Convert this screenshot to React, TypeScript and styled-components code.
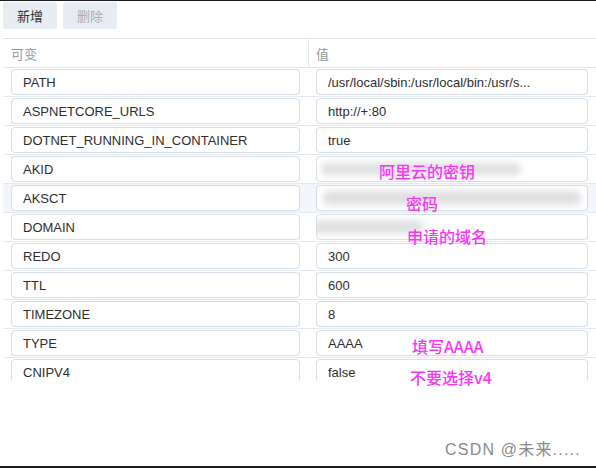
import React from "react";
import styled, { createGlobalStyle } from "styled-components";

const Global = createGlobalStyle`
  html, body { margin: 0; padding: 0; background: #fff; }
  body {
    font-family: "Liberation Sans", "Noto Sans CJK SC", sans-serif;
    font-size: 13px;
    color: #333;
  }
`;

const Frame = styled.div`
  position: relative;
  width: 596px;
  height: 468px;
  box-sizing: border-box;
  border-top: 1px solid #1c1c1c;
  border-bottom: 2px solid #1c1c1c;
  display: flex;
  flex-direction: column;
  overflow: hidden;
  background: #fff;
`;

const Toolbar = styled.div`
  display: flex;
  gap: 6px;
  height: 37px;
  box-sizing: border-box;
  padding: 1px 0 0 3px;
`;

const Button = styled.button<{ $disabled?: boolean }>`
  width: 54px;
  height: 27px;
  border: none;
  border-radius: 3px;
  background: #e7ecf2;
  color: ${(p) => (p.$disabled ? "#a9afb6" : "#2e2e2e")};
  font-family: "Liberation Sans", "Noto Sans CJK SC", sans-serif;
  font-size: 13px;
  padding: 0;
  cursor: ${(p) => (p.$disabled ? "default" : "pointer")};
`;

const Table = styled.div`
  margin-left: 3px;
  border-top: 1px solid #e1e6ec;
  display: flex;
  flex-direction: column;
`;

const HeaderRow = styled.div`
  display: grid;
  grid-template-columns: 305px 1fr;
  height: 29px;
  box-sizing: border-box;
  border-bottom: 1px solid #e1e6ec;
`;

const HeaderCell = styled.div<{ $divider?: boolean }>`
  display: flex;
  align-items: center;
  padding-left: ${(p) => (p.$divider ? "7px" : "8px")};
  border-left: ${(p) => (p.$divider ? "1px solid #e1e6ec" : "none")};
  color: #959a9f;
  font-size: 13px;
`;

const Body = styled.div`
  height: 312px;
  overflow: hidden;
`;

const Row = styled.div<{ $hover?: boolean }>`
  display: grid;
  grid-template-columns: 305px 1fr;
  height: 29px;
  box-sizing: border-box;
  border-bottom: 1px solid #e4e9ee;
  background: ${(p) => (p.$hover ? "#f2f6fa" : "#fff")};
`;

const Cell = styled.div`
  display: flex;
  align-items: center;
  padding: 0 8px;
  min-width: 0;
`;

const Field = styled.div`
  position: relative;
  flex: 1;
  min-width: 0;
  height: 26px;
  box-sizing: border-box;
  border: 1px solid #d5dde6;
  border-radius: 4px;
  background: #fff;
  display: flex;
  align-items: center;
  padding-left: 11px;
  white-space: nowrap;
  overflow: hidden;
  color: #2e2e2e;
`;

const Smudge = styled.span<{ $w: number; $x: number; $h: number }>`
  position: absolute;
  left: ${(p) => p.$x}px;
  top: 50%;
  width: ${(p) => p.$w}px;
  height: ${(p) => p.$h}px;
  transform: translateY(-50%);
  background: #e0e1e3;
  border-radius: 6px;
  filter: blur(3px);
`;

const Note = styled.div<{ $x: number; $y: number }>`
  position: absolute;
  left: ${(p) => p.$x}px;
  top: ${(p) => p.$y}px;
  color: #f736f5;
  font-family: "Noto Sans CJK SC", "Liberation Sans", sans-serif;
  font-size: 16px;
  font-weight: 500;
  line-height: 1;
  white-space: nowrap;
  pointer-events: none;
`;

const Watermark = styled.div`
  position: absolute;
  left: 445px;
  top: 441px;
  color: #8a8a8a;
  font-family: "Liberation Sans", "Noto Sans CJK SC", sans-serif;
  font-size: 16px;
  letter-spacing: 1.2px;
  line-height: 1;
  white-space: nowrap;
  text-shadow: 0 0 2px #fff;
  pointer-events: none;
`;

type Env = {
  key: string;
  value: string;
  hover?: boolean;
  smudge?: { x: number; w: number; h: number };
};

const rows: Env[] = [
  { key: "PATH", value: "/usr/local/sbin:/usr/local/bin:/usr/s..." },
  { key: "ASPNETCORE_URLS", value: "http://+:80" },
  { key: "DOTNET_RUNNING_IN_CONTAINER", value: "true" },
  { key: "AKID", value: "", smudge: { x: 4, w: 200, h: 13 } },
  { key: "AKSCT", value: "", hover: true, smudge: { x: 6, w: 258, h: 15 } },
  { key: "DOMAIN", value: "", smudge: { x: -4, w: 110, h: 14 } },
  { key: "REDO", value: "300" },
  { key: "TTL", value: "600" },
  { key: "TIMEZONE", value: "8" },
  { key: "TYPE", value: "AAAA" },
  { key: "CNIPV4", value: "false" },
];

const notes = [
  { text: "阿里云的密钥", x: 379, y: 162 },
  { text: "密码", x: 406, y: 194 },
  { text: "申请的域名", x: 407, y: 227 },
  { text: "填写AAAA", x: 412, y: 337 },
  { text: "不要选择v4", x: 410, y: 368 },
];

export default function App() {
  return (
    <>
      <Global />
      <Frame>
        <Toolbar>
          <Button>新增</Button>
          <Button $disabled>删除</Button>
        </Toolbar>
        <Table>
          <HeaderRow>
            <HeaderCell>可变</HeaderCell>
            <HeaderCell $divider>值</HeaderCell>
          </HeaderRow>
          <Body>
            {rows.map((r) => (
              <Row key={r.key} $hover={r.hover}>
                <Cell>
                  <Field>{r.key}</Field>
                </Cell>
                <Cell>
                  <Field>
                    {r.smudge && (
                      <Smudge $x={r.smudge.x} $w={r.smudge.w} $h={r.smudge.h} />
                    )}
                    {r.value}
                  </Field>
                </Cell>
              </Row>
            ))}
          </Body>
        </Table>
        {notes.map((n) => (
          <Note key={n.text} $x={n.x} $y={n.y}>
            {n.text}
          </Note>
        ))}
        <Watermark>CSDN @未来.....</Watermark>
      </Frame>
    </>
  );
}
